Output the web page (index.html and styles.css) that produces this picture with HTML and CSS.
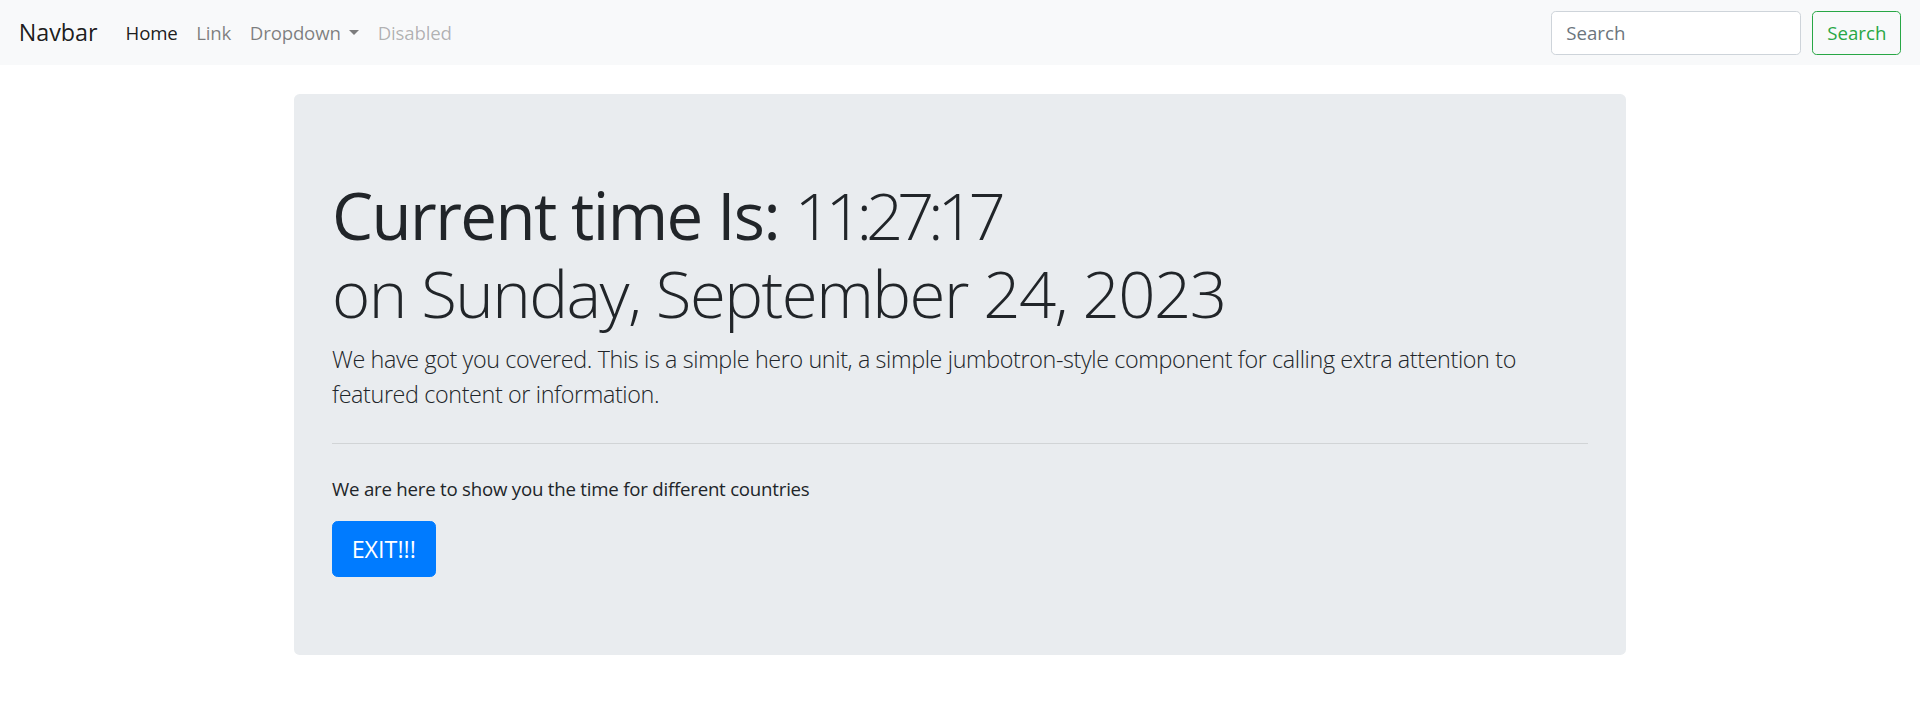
FILE: index.html
```html
<!DOCTYPE html>
<html lang="en">
<head>
<meta charset="utf-8">
<title>Current time</title>
<link rel="stylesheet" href="styles.css">
</head>
<body>
<nav class="navbar">
  <div class="nav-left">
    <a class="brand" href="#">Navbar</a>
    <ul class="nav-links">
      <li><a class="nav-link active" href="#">Home</a></li>
      <li><a class="nav-link" href="#">Link</a></li>
      <li><a class="nav-link dropdown-toggle" href="#">Dropdown</a></li>
      <li><a class="nav-link disabled" href="#">Disabled</a></li>
    </ul>
  </div>
  <form class="search-form">
    <input class="search-input" type="search" placeholder="Search">
    <button class="btn-outline-success" type="button">Search</button>
  </form>
</nav>
<main class="container">
  <section class="jumbotron">
    <h1 class="display"><span class="strong">Current time Is:</span> <span class="time">11:27:17</span><br>on Sunday, September 24, 2023</h1>
    <p class="lead">We have got you covered. This is a simple hero unit, a simple jumbotron-style component for calling extra attention to featured content or information.</p>
    <hr class="divider">
    <p class="info">We are here to show you the time for different countries</p>
    <a class="btn-primary-lg" href="#">EXIT!!!</a>
  </section>
</main>
</body>
</html>
```
FILE: styles.css
```css
html {
  font-size: 18.667px;
}
* {
  box-sizing: border-box;
}
body {
  margin: 0;
  font-family: "Open Sans", "Noto Sans", sans-serif;
  font-size: 1rem;
  line-height: 1.5;
  color: #212529;
  background: #fff;
}
a {
  text-decoration: none;
}

/* Navbar */
.navbar {
  display: flex;
  align-items: center;
  justify-content: space-between;
  padding: 0.5rem 1rem;
  background: #f8f9fa;
}
.nav-left {
  display: flex;
  align-items: center;
}
.brand {
  font-size: 1.25rem;
  line-height: 1.5;
  padding: 0.3125rem 0;
  margin-right: 1rem;
  color: rgba(0, 0, 0, 0.9);
}
.nav-links {
  display: flex;
  list-style: none;
  margin: 0;
  padding: 0;
}
.nav-link {
  display: block;
  padding: 0.5rem 0.5rem;
  color: rgba(0, 0, 0, 0.5);
  letter-spacing: -0.01em;
}
.nav-link.active {
  color: rgba(0, 0, 0, 0.9);
}
.nav-link.disabled {
  color: rgba(0, 0, 0, 0.3);
}
.dropdown-toggle::after {
  content: "";
  display: inline-block;
  margin-left: 0.45em;
  vertical-align: 0.255em;
  border-top: 0.3em solid;
  border-right: 0.3em solid transparent;
  border-left: 0.3em solid transparent;
  border-bottom: 0;
}
.search-form {
  display: flex;
  align-items: center;
  gap: 11px;
}
.search-input {
  width: 250px;
  height: 44px;
  padding: 0.375rem 0.75rem;
  font-family: inherit;
  font-size: 1rem;
  color: #495057;
  background: #fff;
  border: 1px solid #ced4da;
  border-radius: 0.25rem;
}
.search-input::placeholder {
  color: #6c757d;
}
.btn-outline-success {
  height: 44px;
  padding: 0.375rem 0.75rem;
  font-family: inherit;
  font-size: 1rem;
  line-height: 1.5;
  color: #28a745;
  background: transparent;
  border: 1px solid #28a745;
  border-radius: 0.25rem;
}

/* Jumbotron */
.container {
  width: 1332px;
  margin: 0 auto;
}
.jumbotron {
  margin-top: 28.7px;
  padding: 82px 38px 78px;
  background: #e9ecef;
  border-radius: 0.3rem;
}
.display {
  margin: 0 0 0.5rem;
  font-size: 3.5rem;
  font-weight: 300;
  line-height: 1.2;
  letter-spacing: -0.024em;
}
.strong {
  font-weight: 400;
}
.time {
  letter-spacing: -0.095em;
}
.lead {
  margin: 0 0 1rem;
  font-size: 1.25rem;
  font-weight: 300;
  letter-spacing: -0.016em;
}
.divider {
  margin: 30.5px 0 31px;
  border: 0;
  border-top: 1px solid rgba(0, 0, 0, 0.1);
}
.info {
  margin: 0 0 1rem;
  letter-spacing: -0.012em;
}
.btn-primary-lg {
  display: inline-block;
  padding: 0.5rem 1rem;
  font-size: 1.25rem;
  line-height: 1.5;
  color: #fff;
  background: #007bff;
  border: 1px solid #007bff;
  border-radius: 0.3rem;
}
```
